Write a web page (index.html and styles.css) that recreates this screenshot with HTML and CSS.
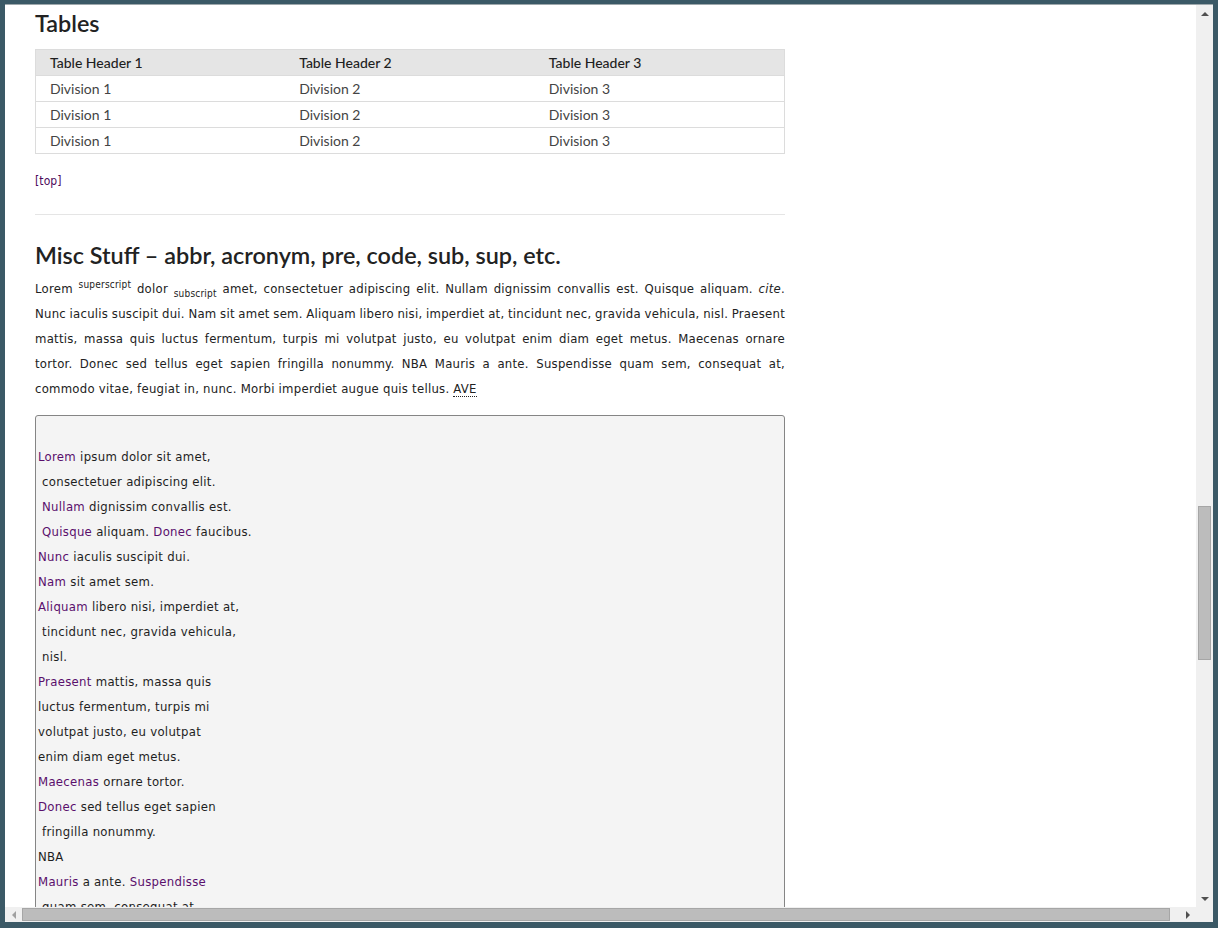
FILE: index.html
```html
<!DOCTYPE html>
<html lang="en">
<head>
<meta charset="utf-8">
<title>Tables and Misc Stuff</title>
<link rel="stylesheet" href="styles.css">
</head>
<body>
<div class="frame">
  <div class="window">
    <div class="main">
      <div class="viewport">
        <div class="content">
          <h2 class="title">Tables</h2>
          <table class="data">
            <thead>
              <tr><th>Table Header 1</th><th>Table Header 2</th><th>Table Header 3</th></tr>
            </thead>
            <tbody>
              <tr><td>Division 1</td><td>Division 2</td><td>Division 3</td></tr>
              <tr><td>Division 1</td><td>Division 2</td><td>Division 3</td></tr>
              <tr><td>Division 1</td><td>Division 2</td><td>Division 3</td></tr>
            </tbody>
          </table>
          <p class="toplink"><a href="#top">[top]</a></p>
          <hr class="rule">
          <h2 class="title misc">Misc Stuff – abbr, acronym, pre, code, sub, sup, etc.</h2>
          <p class="text"><span class="justified">Lorem <sup>superscript</sup> dolor <sub>subscript</sub> amet, consectetuer adipiscing elit. Nullam dignissim convallis est. Quisque aliquam. <cite>cite</cite>.<br>Nunc iaculis suscipit dui. Nam sit amet sem. Aliquam libero nisi, imperdiet at, tincidunt nec, gravida vehicula, nisl. Praesent<br>mattis, massa quis luctus fermentum, turpis mi volutpat justo, eu volutpat enim diam eget metus. Maecenas ornare<br>tortor. Donec sed tellus eget sapien fringilla nonummy. <acronym title="National Basketball Association">NBA</acronym> Mauris a ante. Suspendisse quam sem, consequat at,</span><span class="last">commodo vitae, feugiat in, nunc. Morbi imperdiet augue quis tellus. <abbr title="Avenue">AVE</abbr></span></p>
<pre class="code">

<span class="kw">Lorem</span> ipsum dolor sit amet,
 consectetuer adipiscing elit.
 <span class="kw">Nullam</span> dignissim convallis est.
 <span class="kw">Quisque</span> aliquam. <span class="kw">Donec</span> faucibus.
<span class="kw">Nunc</span> iaculis suscipit dui.
<span class="kw">Nam</span> sit amet sem.
<span class="kw">Aliquam</span> libero nisi, imperdiet at,
 tincidunt nec, gravida vehicula,
 nisl.
<span class="kw">Praesent</span> mattis, massa quis
luctus fermentum, turpis mi
volutpat justo, eu volutpat
enim diam eget metus.
<span class="kw">Maecenas</span> ornare tortor.
<span class="kw">Donec</span> sed tellus eget sapien
 fringilla nonummy.
NBA
<span class="kw">Mauris</span> a ante. <span class="kw">Suspendisse</span>
 quam sem, consequat at,
 commodo vitae, feugiat in,
 nunc.
<span class="kw">Morbi</span> imperdiet augue quis tellus.
</pre>
        </div>
      </div>
      <div class="vscroll">
        <div class="sbtn"><span class="arrow up"></span></div>
        <div class="vtrack"><div class="vthumb"></div></div>
        <div class="sbtn"><span class="arrow down"></span></div>
      </div>
    </div>
    <div class="hscroll">
      <div class="hbtn"><span class="arrow left"></span></div>
      <div class="htrack"><div class="hthumb"></div></div>
      <div class="hbtn"><span class="arrow right"></span></div>
      <div class="corner"></div>
    </div>
  </div>
</div>
</body>
</html>
```

FILE: styles.css
```css
* { box-sizing: border-box; }
html, body { margin: 0; padding: 0; }
body {
  width: 1218px;
  height: 928px;
  overflow: hidden;
  background: #3b5966;
  font-family: "DejaVu Sans Condensed", "Liberation Sans", sans-serif;
  font-stretch: condensed;
}
.frame {
  height: 928px;
  padding: 4px 5px 6px 5px;
  display: flex;
  flex-direction: column;
}
.window {
  flex: 1;
  min-height: 0;
  display: flex;
  flex-direction: column;
  border-top: 1px solid #9ea8ac;
  background: #fff;
}
.main {
  flex: 1;
  min-height: 0;
  display: flex;
}
.viewport {
  flex: 1;
  min-width: 0;
  overflow: hidden;
}
.content {
  width: 780px;
  padding: 3px 0 0 30px;
}
.title {
  margin: 0;
  font-family: Lato, "Liberation Sans", sans-serif;
  font-weight: 600;
  font-size: 23.4px;
  line-height: 30px;
  color: #222;
  font-stretch: normal;
}
.data {
  width: 750px;
  margin-top: 11px;
  border-collapse: collapse;
  table-layout: fixed;
  border: 1px solid #dcdcdc;
  font-family: Lato, "Liberation Sans", sans-serif;
  font-stretch: normal;
  font-size: 14px;
}
.data th, .data td {
  text-align: left;
  padding: 4px 14px;
  line-height: 17px;
  border-bottom: 1px solid #dcdcdc;
  font-weight: 400;
}
.data th {
  background: #e5e5e5;
  color: #1e1e1e;
  font-weight: 500;
}
.data td { color: #444; }
.toplink {
  margin: 20px 0 0 0;
  font-size: 12px;
  line-height: 15px;
  letter-spacing: 0.1px;
}
.toplink a {
  color: #4e0b5c;
  text-decoration: none;
}
.rule {
  margin: 25px 0 0 0;
  width: 750px;
  border: 0;
  border-top: 1px solid #e5e5e5;
  height: 0;
}
.misc { margin-top: 25px; }
.text {
  width: 750px;
  margin: 6px 0 0 0;
  font-size: 13px;
  line-height: 25px;
  letter-spacing: 0.25px;
  word-spacing: -0.5px;
  color: #222;
}
.text .justified {
  display: block;
  text-align: justify;
  text-align-last: justify;
}
.text .last {
  display: block;
  text-align: left;
  word-spacing: 0;
}
.text sup, .text sub {
  font-size: 10px;
  line-height: 0;
  letter-spacing: 0.2px;
}
.text abbr {
  text-decoration: none;
  border-bottom: 1px dotted #222;
}
.text acronym { border: 0; text-decoration: none; }
.code {
  width: 750px;
  margin: 14px 0 0 0;
  padding: 3px 2px 0 2px;
  background: #f4f4f4;
  border: 1px solid #858585;
  border-radius: 3px;
  font-family: "DejaVu Sans Condensed", "Liberation Sans", sans-serif;
  font-size: 13px;
  line-height: 25px;
  letter-spacing: 0.3px;
  color: #1e1e1e;
}
.kw { color: #5a0f6c; }

.vscroll {
  width: 17px;
  flex: none;
  background: #f0f0f0;
  display: flex;
  flex-direction: column;
}
.sbtn {
  height: 17px;
  display: flex;
  align-items: center;
  justify-content: center;
}
.vtrack { flex: 1; }
.vthumb {
  margin: 484px 0 0 2px;
  width: 13px;
  height: 154px;
  background: #bcbcbc;
  border: 1px solid #a6a6a6;
}
.hscroll {
  height: 15px;
  flex: none;
  display: flex;
  background: #f0f0f0;
}
.hbtn {
  width: 17px;
  display: flex;
  align-items: center;
  justify-content: center;
}
.htrack { flex: 1; }
.hthumb {
  margin-top: 1px;
  width: 1148px;
  height: 13px;
  background: #bcbcbc;
  border: 1px solid #a6a6a6;
}
.corner { width: 17px; }
.arrow { width: 0; height: 0; display: block; }
.arrow.up {
  border-left: 4px solid transparent;
  border-right: 4px solid transparent;
  border-bottom: 4px solid #505050;
}
.arrow.down {
  border-left: 4px solid transparent;
  border-right: 4px solid transparent;
  border-top: 4px solid #505050;
}
.arrow.left {
  border-top: 4px solid transparent;
  border-bottom: 4px solid transparent;
  border-right: 4px solid #a0a0a0;
}
.arrow.right {
  border-top: 4px solid transparent;
  border-bottom: 4px solid transparent;
  border-left: 4px solid #505050;
}
```
